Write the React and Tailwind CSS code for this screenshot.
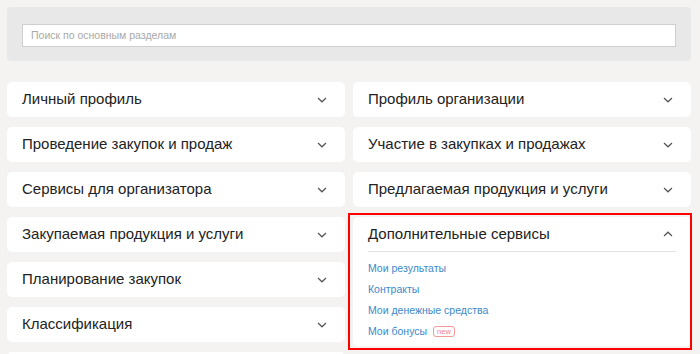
import React from 'react';

const LEFT = [
  'Личный профиль',
  'Проведение закупок и продаж',
  'Сервисы для организатора',
  'Закупаемая продукция и услуги',
  'Планирование закупок',
  'Классификация',
];

const RIGHT = [
  'Профиль организации',
  'Участие в закупках и продажах',
  'Предлагаемая продукция и услуги',
];

const LINKS = ['Мои результаты', 'Контракты', 'Мои денежные средства', 'Мои бонусы'];

const Chevron = ({ up }) => (
  <svg width="10" height="6" viewBox="0 0 10 6" className="shrink-0">
    <path
      d={up ? 'M1 5 L5 1.2 L9 5' : 'M1 1 L5 4.8 L9 1'}
      fill="none"
      stroke="#555"
      strokeWidth="1.2"
    />
  </svg>
);

const Card = ({ title }) => (
  <div className="h-[35px] shrink-0 bg-white rounded-[5px] flex items-center justify-between pl-[15px] pr-[18px]">
    <span className="text-[15px] text-[#222]">{title}</span>
    <Chevron />
  </div>
);

export default function App() {
  return (
    <div
      className="w-[700px] h-[354px] overflow-hidden bg-[#f4f3f1] pt-[7px] px-[7px]"
      style={{ fontFamily: '"Liberation Sans", Arial, sans-serif' }}
    >
      {/* Search */}
      <div className="w-[684px] h-[54px] bg-[#e8e8e8] rounded-[4px] px-[15px] pt-[15px]">
        <input
          type="text"
          placeholder="Поиск по основным разделам"
          className="w-full h-[23px] bg-white border border-[#cfcfcf] px-[8px] text-[10.5px] text-[#333] placeholder-[#a8a8a8] outline-none"
        />
      </div>

      <div className="flex gap-[8px] mt-[21px]">
        <div className="w-[338px] flex flex-col gap-[10px]">
          {LEFT.map((t) => (
            <Card key={t} title={t} />
          ))}
          <div className="h-[35px] shrink-0 bg-white rounded-[5px]" />
        </div>

        <div className="w-[338px] flex flex-col gap-[10px]">
          {RIGHT.map((t) => (
            <Card key={t} title={t} />
          ))}

          {/* Expanded */}
          <div className="relative bg-white rounded-[5px] px-[15px] pb-[4px]">
            <div className="h-[35px] flex items-center justify-between pr-[3px] border-b border-[#e3e3e3]">
              <span className="text-[15px] text-[#222]">Дополнительные сервисы</span>
              <Chevron up />
            </div>
            <div className="pt-[6px] flex flex-col">
              {LINKS.map((l, i) => (
                <div key={l} className="h-[21px] flex items-center gap-[6px]">
                  <span className="text-[10.5px] text-[#3c89cb]">{l}</span>
                  {i === 3 && (
                    <span className="text-[7.5px] leading-none text-[#f07f7f] border border-[#f59a9a] rounded-[3px] px-[3px] py-[1px]">
                      new
                    </span>
                  )}
                </div>
              ))}
            </div>
            <div className="absolute -left-[5px] -top-[4px] -right-[1px] -bottom-[4px] border-2 border-[#f00] pointer-events-none" />
          </div>
        </div>
      </div>
    </div>
  );
}
